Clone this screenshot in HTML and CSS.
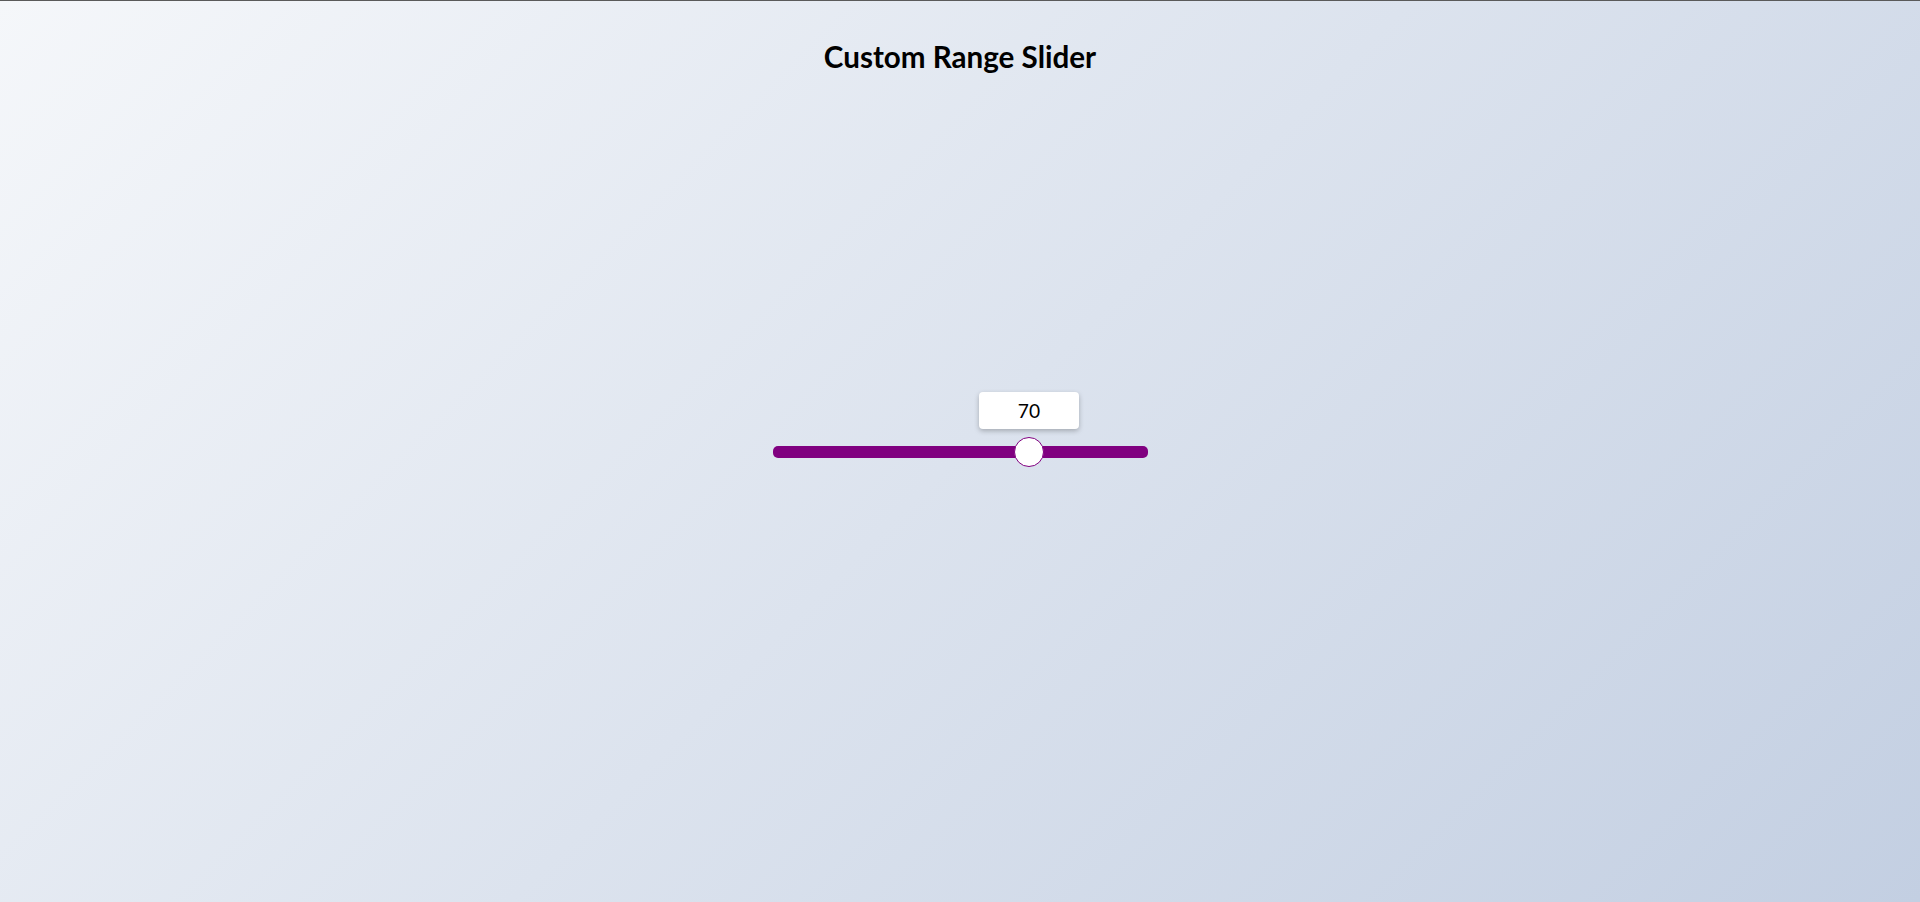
FILE: index.html
```html
<!DOCTYPE html>
<html lang="en">
<head>
<meta charset="utf-8">
<title>Custom Range Slider</title>
<link rel="stylesheet" href="styles.css">
</head>
<body>
<div class="page">
  <h1 class="title">Custom Range Slider</h1>
  <div class="slider">
    <div class="value-label" style="left: calc(15px + 0.7 * (100% - 30px));">70</div>
    <input class="range" type="range" min="0" max="100" value="70">
  </div>
</div>
</body>
</html>
```
FILE: styles.css
```css
* { box-sizing: border-box; }
html, body { margin: 0; padding: 0; }
body {
  font-family: Lato, "Noto Sans", sans-serif;
  background: linear-gradient(135deg, #f5f7fa 0%, #c3cfe2 100%);
  min-height: 100vh;
  border-top: 1px solid #5a5a5a;
}
.page {
  height: calc(100vh - 1px);
  display: grid;
  grid-template-rows: 1fr auto 1fr;
  justify-items: center;
}
.title {
  align-self: start;
  margin: 38px 0 0;
  font-size: 29.6px;
  font-weight: 700;
  color: #000;
}
.slider {
  position: relative;
  width: 375px;
  height: 30px;
  margin-top: 1px;
}
.range {
  -webkit-appearance: none;
  appearance: none;
  display: block;
  width: 100%;
  height: 30px;
  margin: 0;
  padding: 0;
  background: transparent;
  outline: none;
}
.range::-webkit-slider-runnable-track {
  height: 12px;
  background: #800080;
  border-radius: 5px;
}
.range::-webkit-slider-thumb {
  -webkit-appearance: none;
  appearance: none;
  width: 30px;
  height: 30px;
  margin-top: -9px;
  border-radius: 50%;
  background: #fff;
  border: 1px solid #800080;
}
.value-label {
  position: absolute;
  top: -45px;
  transform: translateX(-50%);
  width: 100px;
  height: 37px;
  display: flex;
  align-items: center;
  justify-content: center;
  background: #fff;
  border-radius: 4px;
  box-shadow: 0 2px 5px rgba(0, 0, 0, 0.25);
  font-size: 19.2px;
  color: #000;
}
```
